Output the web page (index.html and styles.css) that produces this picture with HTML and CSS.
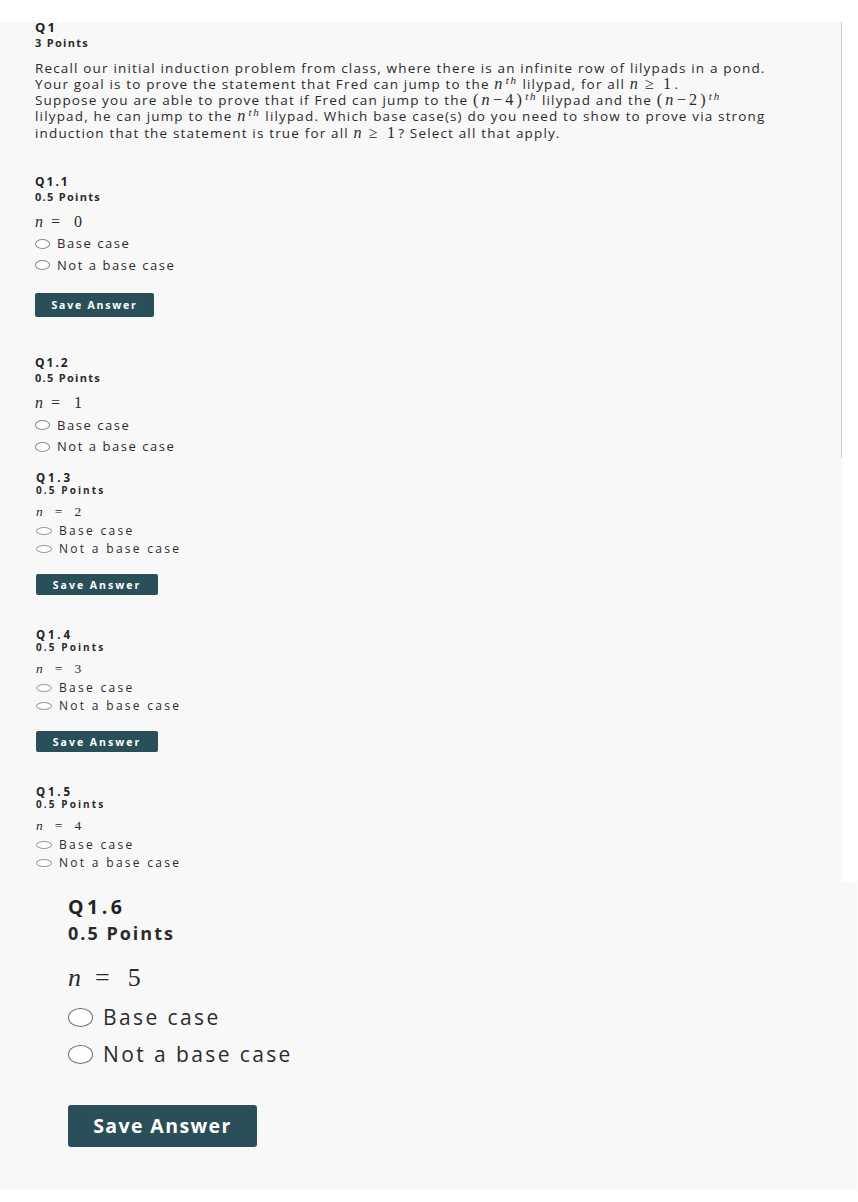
FILE: index.html
```html
<!DOCTYPE html>
<html lang="en">
<head>
    <meta charset="UTF-8">
    <meta name="viewport" content="width=device-width, initial-scale=1.0">
    <title>Q1 - Strong Induction</title>
    <link rel="stylesheet" href="styles.css">
</head>
<body>
    <div class="sheet">
        <div class="sheet-body">
            <h2 class="q-title q-title--main">Q1</h2>
            <div class="q-points q-points--main">3 Points</div>
            <p class="prompt">
                Recall our initial induction problem from class, where there is an infinite row of lilypads in a pond.<br>
                Your goal is to prove the statement that Fred can jump to the <span class="m"><i>n</i><sup>th</sup></span> lilypad, for all <span class="m"><i>n</i><span class="rel">≥</span>1</span>.<br>
                Suppose you are able to prove that if Fred can jump to the <span class="m">(<i>n</i>−4)<sup>th</sup></span> lilypad and the <span class="m">(<i>n</i>−2)<sup>th</sup></span><br>
                lilypad, he can jump to the <span class="m"><i>n</i><sup>th</sup></span> lilypad. Which base case(s) do you need to show to prove via strong<br>
                induction that the statement is true for all <span class="m"><i>n</i><span class="rel">≥</span>1</span>? Select all that apply.
            </p>

            <section class="question">
                <h3 class="q-title">Q1.1</h3>
                <div class="q-points">0.5 Points</div>
                <div class="math"><i>n</i><span class="eq">=</span>0</div>
                <div class="options">
                    <label class="option"><input type="radio" name="q11" class="radio">Base case</label>
                    <label class="option"><input type="radio" name="q11" class="radio">Not a base case</label>
                </div>
                <button class="save">Save Answer</button>
            </section>

            <section class="question">
                <h3 class="q-title">Q1.2</h3>
                <div class="q-points">0.5 Points</div>
                <div class="math"><i>n</i><span class="eq">=</span>1</div>
                <div class="options">
                    <label class="option"><input type="radio" name="q12" class="radio">Base case</label>
                    <label class="option"><input type="radio" name="q12" class="radio">Not a base case</label>
                </div>
            </section>

            <section class="question question--small">
                <h3 class="q-title">Q1.3</h3>
                <div class="q-points">0.5 Points</div>
                <div class="math"><i>n</i><span class="eq">=</span>2</div>
                <div class="options">
                    <label class="option"><input type="radio" name="q13" class="radio">Base case</label>
                    <label class="option"><input type="radio" name="q13" class="radio">Not a base case</label>
                </div>
                <button class="save">Save Answer</button>
            </section>

            <section class="question question--small">
                <h3 class="q-title">Q1.4</h3>
                <div class="q-points">0.5 Points</div>
                <div class="math"><i>n</i><span class="eq">=</span>3</div>
                <div class="options">
                    <label class="option"><input type="radio" name="q14" class="radio">Base case</label>
                    <label class="option"><input type="radio" name="q14" class="radio">Not a base case</label>
                </div>
                <button class="save">Save Answer</button>
            </section>

            <section class="question question--small">
                <h3 class="q-title">Q1.5</h3>
                <div class="q-points">0.5 Points</div>
                <div class="math"><i>n</i><span class="eq">=</span>4</div>
                <div class="options">
                    <label class="option"><input type="radio" name="q15" class="radio">Base case</label>
                    <label class="option"><input type="radio" name="q15" class="radio">Not a base case</label>
                </div>
            </section>
        </div>
        <div class="scroll-line"></div>
    </div>

    <div class="sheet-lower">
        <section class="question question--big">
            <h3 class="q-title">Q1.6</h3>
            <div class="q-points">0.5 Points</div>
            <div class="math"><i>n</i><span class="eq">=</span>5</div>
            <div class="options">
                <label class="option"><input type="radio" name="q16" class="radio">Base case</label>
                <label class="option"><input type="radio" name="q16" class="radio">Not a base case</label>
            </div>
            <button class="save">Save Answer</button>
        </section>
    </div>
</body>
</html>
```

FILE: styles.css
```css
* {
    box-sizing: border-box;
}

body {
    margin: 0;
    background-color: #fff;
    font-family: "Open Sans", sans-serif;
    color: #2b2b2b;
}

.sheet {
    display: flex;
    align-items: flex-start;
    width: 842px;
    height: 860px;
    margin-top: 22px;
    background-color: #f8f8f8;
}

.sheet-body {
    flex: 1;
    padding-left: 35px;
}

.scroll-line {
    width: 1px;
    height: 436px;
    background-color: #cfcfcf;
}

.sheet-lower {
    width: 857px;
    height: 308px;
    padding: 13px 0 0 68px;
    background-color: #f8f8f8;
}

/* titles / points */
.q-title {
    margin: 0;
    font-size: 12px;
    line-height: 14px;
    font-weight: 700;
    letter-spacing: 2px;
    color: #222;
}

.q-title--main {
    margin-top: -2px;
    font-size: 13px;
    letter-spacing: 2.2px;
}

.q-points {
    margin-top: 0.6px;
    font-size: 11px;
    line-height: 13px;
    font-weight: 700;
    letter-spacing: 1.3px;
    color: #2b2b2b;
}

.q-points--main {
    margin-top: 2px;
}

.prompt {
    margin: 10.5px 0 34.25px;
    font-size: 13.5px;
    line-height: 16.25px;
    letter-spacing: 1.16px;
    white-space: nowrap;
}

.m {
    font-family: "Liberation Serif", serif;
    font-size: 1.2em;
    letter-spacing: 3.2px;
}

.m .rel {
    margin: 0 6px 0 4px;
}

.m sup {
    font-size: 0.68em;
    font-style: italic;
    line-height: 0;
    vertical-align: 0.42em;
    letter-spacing: 1.8px;
}

/* question block */
.question + .question {
    margin-top: 39.3px;
}

.math {
    margin-top: 11px;
    font-family: "Liberation Serif", serif;
    font-size: 16px;
    line-height: 16px;
}

.math .eq {
    margin: 0 14px 0 8px;
}

.options {
    margin-top: 3.6px;
}

.option {
    display: flex;
    align-items: center;
    font-size: 13px;
    line-height: 21.5px;
    letter-spacing: 1.55px;
}

.radio {
    appearance: none;
    width: 15px;
    height: 10px;
    margin: 0 7px 0 0;
    border: 1px solid #8a8a8a;
    border-radius: 50%;
    background-color: #fff;
}

.save {
    display: block;
    width: 119px;
    height: 24px;
    margin-top: 17px;
    padding: 0;
    border: none;
    border-radius: 2px;
    background-color: #2a4f58;
    color: #fff;
    font-family: "Open Sans", sans-serif;
    font-size: 10.5px;
    font-weight: 700;
    letter-spacing: 1.8px;
    cursor: pointer;
}

/* smaller, wider scaled block (Q1.3 - Q1.5) */
.question + .question--small {
    margin-top: 13px;
}

.question--small + .question--small {
    margin-top: 33px;
}

.question--small {
    margin-left: 1px;
}

.question--small .q-title {
    font-size: 11.5px;
    line-height: 13px;
    letter-spacing: 2.8px;
}

.question--small .q-points {
    margin-top: 0.4px;
    font-size: 10px;
    line-height: 12px;
    letter-spacing: 2.1px;
}

.question--small .math {
    margin-top: 9.2px;
    font-size: 13.5px;
    line-height: 14px;
}

.question--small .math .eq {
    margin: 0 12px 0 12px;
}

.question--small .options {
    margin-top: 3px;
}

.question--small .option {
    font-size: 12px;
    line-height: 18px;
    letter-spacing: 2.3px;
}

.question--small .radio {
    width: 16px;
    height: 8px;
    border-color: #9a9a9a;
}

.question--small .save {
    width: 122px;
    height: 20.5px;
    margin-top: 16px;
    letter-spacing: 2px;
}

/* big block (Q1.6) */
.question--big .q-title {
    font-size: 19.5px;
    line-height: 24px;
    letter-spacing: 3.5px;
}

.question--big .q-points {
    margin-top: 3.4px;
    font-size: 18px;
    line-height: 22px;
    letter-spacing: 2px;
}

.question--big .math {
    margin-top: 19.9px;
    font-size: 26px;
    line-height: 28px;
}

.question--big .math .eq {
    margin: 0 18px 0 14px;
}

.question--big .options {
    margin-top: 6.7px;
}

.question--big .option {
    font-size: 21px;
    line-height: 37px;
    letter-spacing: 2.4px;
}

.question--big .radio {
    width: 25px;
    height: 19px;
    margin-right: 10px;
    border: 1.5px solid #6b6b6b;
}

.question--big .save {
    width: 189px;
    height: 42px;
    margin-top: 32px;
    border-radius: 3px;
    font-size: 19.5px;
    letter-spacing: 1.4px;
}
```
